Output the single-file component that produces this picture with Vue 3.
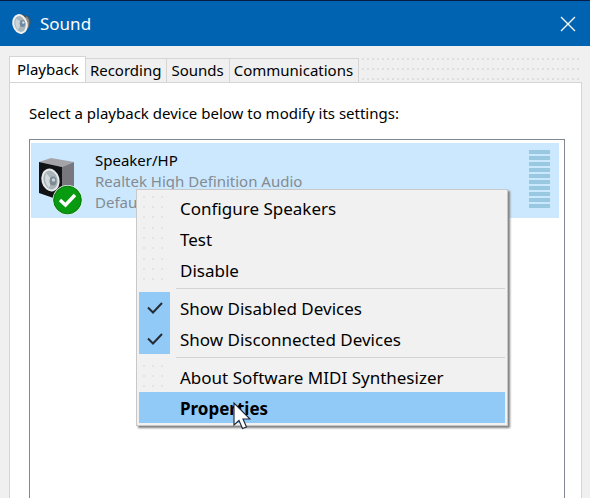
<script setup>
import { ref } from 'vue'

const tabs = ['Playback', 'Recording', 'Sounds', 'Communications']
const activeTab = ref('Playback')

const menuGroups = [
  [{ label: 'Configure Speakers' }, { label: 'Test' }, { label: 'Disable' }],
  [
    { label: 'Show Disabled Devices', checked: true },
    { label: 'Show Disconnected Devices', checked: true },
  ],
  [{ label: 'About Software MIDI Synthesizer' }, { label: 'Properties', active: true }],
]
</script>

<template>
  <div class="window">
    <header class="titlebar">
      <svg class="app-icon" width="20" height="22" viewBox="0 0 20 22" aria-hidden="true">
        <path d="M8 1 L15 3 Q19 5 18.5 10 Q18 14 14 17 L9 21 Z" fill="#55524f" />
        <path d="M14 4 Q18 8 15 15" fill="none" stroke="#8a8784" stroke-width="2" />
        <ellipse cx="8" cy="11" rx="6.6" ry="9" transform="rotate(-14 8 11)" fill="#a9b5bd" stroke="#f1f1ef" stroke-width="2" />
        <path d="M4 6 L10 9 L6 17 Q2 11 4 6 Z" fill="#ccd5da" />
        <ellipse cx="10.5" cy="10.5" rx="2.8" ry="3.6" fill="#7089a0" />
        <circle cx="11.3" cy="9.5" r="1.3" fill="#cfdce4" />
      </svg>
      <h1 class="title">Sound</h1>
      <button class="close" type="button" aria-label="Close">
        <svg width="16" height="16" viewBox="0 0 16 16" aria-hidden="true">
          <path d="M1 1 L15 15 M15 1 L1 15" stroke="#fff" stroke-width="1.3" />
        </svg>
      </button>
    </header>

    <main class="body">
      <div class="tabs" role="tablist">
        <button
          v-for="tab in tabs"
          :key="tab"
          type="button"
          role="tab"
          class="tab"
          :class="{ selected: tab === activeTab }"
          :aria-selected="tab === activeTab"
          @click="activeTab = tab"
        >{{ tab }}</button>
        <span class="strip"></span>
      </div>

      <section class="panel" role="tabpanel">
        <p class="hint">Select a playback device below to modify its settings:</p>
        <div class="devices">
          <div class="device">
            <svg class="device-icon" width="46" height="60" viewBox="0 0 46 60" aria-hidden="true">
              <path d="M1 7 L13 3 L36 7 L24 12 Z" fill="#a4a4a8" />
              <path d="M24 12 L36 7 L36 39 L24 45 Z" fill="#77777d" />
              <path d="M1 7 L24 12 L24 46 L1 38 Z" fill="#111315" />
              <ellipse cx="12.5" cy="25" rx="8" ry="10.5" transform="rotate(-14 12.5 25)" fill="#a9b3b8" stroke="#e6eaec" stroke-width="2" />
              <path d="M8 18 L14 25 L11 33 Q5 27 8 18 Z" fill="#d3dadd" />
              <ellipse cx="15" cy="26" rx="3.5" ry="4.5" fill="#7d8b93" />
              <circle cx="15.5" cy="25" r="1.8" fill="#c8d2d8" />
              <circle cx="29.5" cy="45" r="15" fill="#d8eedb" />
              <circle cx="29.5" cy="45" r="13.8" fill="#089a10" stroke="#057a0b" stroke-width="1" />
              <path d="M22 45 L27.5 50 L37 40" fill="none" stroke="#fff" stroke-width="3.4" />
            </svg>
            <div class="details">
              <div class="name">Speaker/HP</div>
              <div>Realtek High Definition Audio</div>
              <div>Default Device</div>
            </div>
            <div class="meter" aria-hidden="true">
              <i v-for="n in 10" :key="n"></i>
            </div>
          </div>
        </div>
      </section>
    </main>

    <div class="menu" role="menu">
      <div v-for="(group, g) in menuGroups" :key="g" class="group">
        <button
          v-for="item in group"
          :key="item.label"
          type="button"
          :role="item.checked ? 'menuitemcheckbox' : 'menuitem'"
          :aria-checked="item.checked"
          class="item"
          :class="{ active: item.active }"
        >
          <span class="gutter" :class="{ checked: item.checked }">
            <svg v-if="item.checked" width="16" height="12" viewBox="0 0 16 12" aria-hidden="true">
              <path d="M1 5.5 L6 10.5 L15 1" fill="none" stroke="#252b33" stroke-width="2" />
            </svg>
          </span>
          <span class="label">{{ item.label }}</span>
        </button>
      </div>
    </div>

    <svg class="cursor" width="18" height="28" viewBox="0 0 18 28" aria-hidden="true">
      <path d="M1 1 L1 23 L6 18.5 L9.5 26.5 L13.5 25 L10 17 L17 17 Z" fill="#fff" stroke="#1c2438" stroke-width="1.1" />
    </svg>
  </div>
</template>

<style>
body {
  margin: 0;
}
</style>

<style scoped>
.window {
  position: relative;
  display: flex;
  flex-direction: column;
  box-sizing: border-box;
  min-height: 100vh;
  background: #f0f0f0;
  color: #000;
  font-family: "Noto Sans", "Open Sans", sans-serif;
  font-size: 15px;
}

button {
  margin: 0;
  padding: 0;
  border: 0;
  background: none;
  color: inherit;
  font: inherit;
}

.titlebar {
  display: flex;
  align-items: center;
  box-sizing: border-box;
  height: 46px;
  padding: 0 13px 0 12px;
  border-top: 1px solid #071b45;
  background: #0063b1;
  color: #fff;
}

.title {
  flex: 1;
  margin: 0 0 0 8px;
  font-size: 17px;
  font-weight: 400;
  line-height: 24px;
}

.close {
  display: flex;
  padding: 1px;
}

.body {
  display: flex;
  flex: 1;
  flex-direction: column;
  padding: 10px 8px 0 9px;
}

.tabs {
  display: flex;
  align-items: flex-end;
}

.tab {
  box-sizing: border-box;
  height: 24px;
  padding: 0 5px 0 4px;
  border: 1px solid #d5d5d5;
  border-width: 1px 1px 0 0;
  line-height: 23px;
}

.tab.selected {
  height: 27px;
  margin-bottom: -1px;
  padding: 0 6px 2px 7px;
  border-left-width: 1px;
  background: #fff;
}

.strip {
  flex: 1;
  align-self: stretch;
  background: radial-gradient(circle at 4px 3px, #dedede 0 1px, transparent 1px) 0 0 / 5px 10px;
}

.panel {
  display: flex;
  flex: 1;
  flex-direction: column;
  padding: 19px 16px 0 19px;
  border: 1px solid #d5d5d5;
  border-bottom: 0;
  background: #fff;
}

.hint {
  margin: 0 0 15px;
  line-height: 22px;
}

.devices {
  flex: 1;
  padding: 3px 5px 0 1px;
  border: 1px solid #828790;
  border-bottom: 0;
}

.device {
  display: flex;
  align-items: flex-start;
  padding: 7px 9px 3px 7px;
  background: #cce8ff;
}

.device-icon {
  flex: none;
  margin-top: 5px;
}

.details {
  flex: 1;
  margin-left: 11px;
  color: #848b91;
  line-height: 21px;
}

.name {
  color: #000;
}

.meter {
  display: grid;
  gap: 2px;
}

.meter i {
  width: 21px;
  height: 4px;
  background: #99c9e1;
}

.menu {
  position: absolute;
  top: 189px;
  left: 136px;
  box-sizing: border-box;
  width: 372px;
  padding: 2px;
  border: 1px solid #c8c8c8;
  background: #f1f1f1;
  box-shadow: 2px 2px 2px #808080;
  font-size: 17px;
}

.group + .group::before {
  content: "";
  display: block;
  height: 1px;
  margin: 3px 0 3px 37px;
  background: #d3d3d3;
}

.item {
  display: flex;
  align-items: center;
  gap: 10px;
  width: 100%;
  height: 31px;
  text-align: left;
}

.label {
  padding-top: 2px;
}

.item.active {
  background: #91c9f7;
  font-weight: 700;
}

.gutter {
  display: flex;
  align-items: center;
  justify-content: center;
  width: 31px;
  height: 31px;
  background: radial-gradient(circle at 5px 5px, #e4e4e4 0 1px, transparent 1px) 0 0 / 9px 10px;
}

.gutter.checked {
  background: #91c9f7;
}

.active .gutter {
  background: none;
}

.cursor {
  position: absolute;
  top: 402px;
  left: 233px;
}
</style>
